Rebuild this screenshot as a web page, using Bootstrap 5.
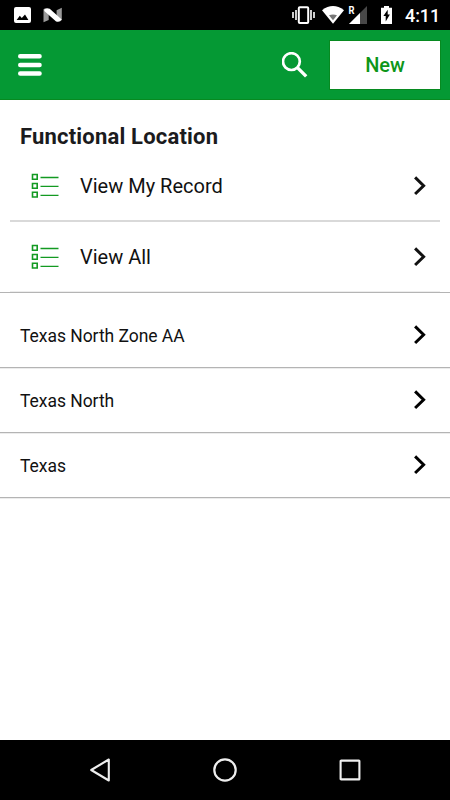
<!DOCTYPE html>
<html lang="en">
<head>
<meta charset="utf-8">
<meta name="viewport" content="width=device-width, initial-scale=1">
<title>Functional Location</title>
<link href="https://cdn.jsdelivr.net/npm/bootstrap@5.3.0/dist/css/bootstrap.min.css" rel="stylesheet">
<style>
body { font-family: Roboto, "Liberation Sans", sans-serif; color: #111; }
svg { display: block; flex: none; }
.status-bar { height: 30px; background: #000; padding: 0 11px 0 14px; }
.status-bar .android-n { margin-left: 12px; }
.clock { font-size: 18px; font-weight: 500; line-height: 30px; width: 34px; margin-left: 13px; padding-top: 1px; letter-spacing: -.1px; white-space: nowrap; }
.app-bar { height: 70px; background: #059934; padding: 0 10px 0 18px; border-bottom: 1px solid #078a20; }
.btn-new { width: 110px; height: 48px; font-size: 20px; font-weight: 500; color: #0d9618; background: #fff; margin-left: 22px; outline: 1px solid #078a20; }
.btn-new:hover { background: #f4f4f4; color: #0d9618; }
.heading { font-size: 22px; line-height: 26px; font-weight: 700; letter-spacing: .19px; color: #1b1b1d; padding: 24px 20px 0; height: 51px; }
.view-row { margin: 0 10px; padding: 0 13px 0 21px; font-size: 20px; color: #111; text-decoration: none; border-bottom: 2px solid #d9d9d9; }
.view-row span { margin-left: 21px; }
.view-first { height: 71px; }
.view-second { height: 70px; border-bottom: 1px solid #ededed; }
.records { border-top: 1px solid #b4b4b4; }
.record { height: 65px; padding: 0 23px 0 20px; font-size: 17.5px; letter-spacing: -.04px; color: #111; text-decoration: none; border-bottom: 1px solid #b4b4b4; box-shadow: 0 1px #ececec; }
.record span { padding-top: 2px; }
.record svg { color: #000; }
.record:first-child { height: 75px; padding-top: 10px; }
.nav-keys { height: 60px; background: #000; padding: 0 88px; }
</style>
<script src="https://cdn.jsdelivr.net/npm/bootstrap@5.3.0/dist/js/bootstrap.bundle.min.js"></script>
</head>
<body>
<svg class="d-none">
  <symbol id="list-icon" viewBox="0 0 28 26">
    <path d="M1.5 1.5h4.7v4.7h-4.7zM1.5 10.5h4.7v4.7h-4.7zM1.5 19.3h4.7v4.7h-4.7z" fill="none" stroke="#139a22" stroke-width="1.6"/>
    <path d="M9.5 4.5h18M9.5 13.4h18M9.5 22.4h18" stroke="#139a22" stroke-width="1.4"/>
  </symbol>
  <symbol id="chevron" viewBox="0 0 14 20">
    <path d="M2.1 1.4 10.6 9.7 2.1 18" fill="none" stroke="currentColor" stroke-width="3"/>
  </symbol>
</svg>
<div class="d-flex flex-column vh-100 bg-white overflow-hidden">
  <div class="status-bar d-flex align-items-center text-white">
    <svg width="17" height="30" viewBox="0 0 17 30"><path fill="#fff" fill-rule="evenodd" d="M2 7h13q2 0 2 2v12q0 2-2 2H2q-2 0-2-2V9q0-2 2-2zM2.6 20h11.8l-3.4-5.5-3.2 3.5-2-2.2z"/></svg>
    <svg class="ms-auto order-1" width="101" height="30" viewBox="291 0 101 30">
      <path d="M293 12v6M296 10v10M311 10v10M314 12v6" stroke="#fff" stroke-width="1.6"/>
      <rect x="298.8" y="7.2" width="9.4" height="15.8" rx="1" fill="none" stroke="#fff" stroke-width="2"/>
      <path d="M322 10.2Q333 2 344 10.2L333 23.7z" fill="#fff"/>
      <path d="M329 15.2q4-1.2 8 0l-4 5z" fill="#777"/>
      <path d="M367 6v18h-18z" fill="#484848"/>
      <path d="M360 13v11h-11z" fill="#fff"/>
      <text x="348.6" y="14" font-size="10" font-weight="700" textLength="6" lengthAdjust="spacingAndGlyphs" fill="#fff">R</text>
      <path d="M384 6h5v1.8h3V24h-11V7.8h3z" fill="#fff"/>
      <path d="M387.7 9.8 383.4 16h2.3v5.6l4.2-7.1h-2.2z" fill="#000"/>
    </svg>
    <svg class="android-n" width="20" height="30" viewBox="43 0 20 30">
      <path d="M43.5 9v13.2l5.2-2.3V11zM61.8 7.8v12.8l-5.2-2.8V10.3z" fill="#999"/>
      <path d="M44.3 8.8q3-1.2 5.4 0L61.7 19.5q-1.6 3.2-5.6 2L44.3 11z" fill="#fff"/>
    </svg>
    <div class="clock order-2">4:11</div>
  </div>
  <header class="app-bar d-flex align-items-center text-white">
    <svg width="24" height="22" viewBox="0 0 24 22"><path d="M2.2 2.3h19.4M2.2 11h19.4M2.2 19.5h19.4" stroke="#fff" stroke-width="4.4" stroke-linecap="round"/></svg>
    <svg class="ms-auto" width="26" height="26" viewBox="0 0 26 26"><circle cx="9.4" cy="9.6" r="8.4" fill="none" stroke="#fff" stroke-width="2.7"/><path d="m15.2 15.4 9 9" stroke="#fff" stroke-width="3.4"/></svg>
    <button class="btn btn-new rounded-0 border-0 p-0">New</button>
  </header>
  <main class="flex-grow-1">
    <h1 class="heading mb-0">Functional Location</h1>
    <a href="#" class="view-row view-first d-flex align-items-center">
      <svg width="28" height="26"><use href="#list-icon"/></svg><span>View My Record</span>
      <svg class="ms-auto" width="14" height="20"><use href="#chevron"/></svg>
    </a>
    <a href="#" class="view-row view-second d-flex align-items-center">
      <svg width="28" height="26"><use href="#list-icon"/></svg><span>View All</span>
      <svg class="ms-auto" width="14" height="20"><use href="#chevron"/></svg>
    </a>
    <div class="records">
      <a href="#" class="record d-flex align-items-center justify-content-between"><span>Texas North Zone AA</span><svg width="14" height="20"><use href="#chevron"/></svg></a>
      <a href="#" class="record d-flex align-items-center justify-content-between"><span>Texas North</span><svg width="14" height="20"><use href="#chevron"/></svg></a>
      <a href="#" class="record d-flex align-items-center justify-content-between"><span>Texas</span><svg width="14" height="20"><use href="#chevron"/></svg></a>
    </div>
  </main>
  <nav class="nav-keys d-flex align-items-center justify-content-between">
    <svg width="24" height="26" viewBox="0 0 24 26"><path d="M20.8 2.5v21L3.2 13z" fill="none" stroke="#eee" stroke-width="2.1" stroke-linejoin="round"/></svg>
    <svg width="26" height="26" viewBox="0 0 26 26"><circle cx="13" cy="13" r="10.7" fill="none" stroke="#eee" stroke-width="2.2"/></svg>
    <svg width="24" height="26" viewBox="0 0 24 26"><rect x="2.6" y="3.6" width="18.8" height="18.8" rx=".5" fill="none" stroke="#eee" stroke-width="2.1"/></svg>
  </nav>
</div>
</body>
</html>
